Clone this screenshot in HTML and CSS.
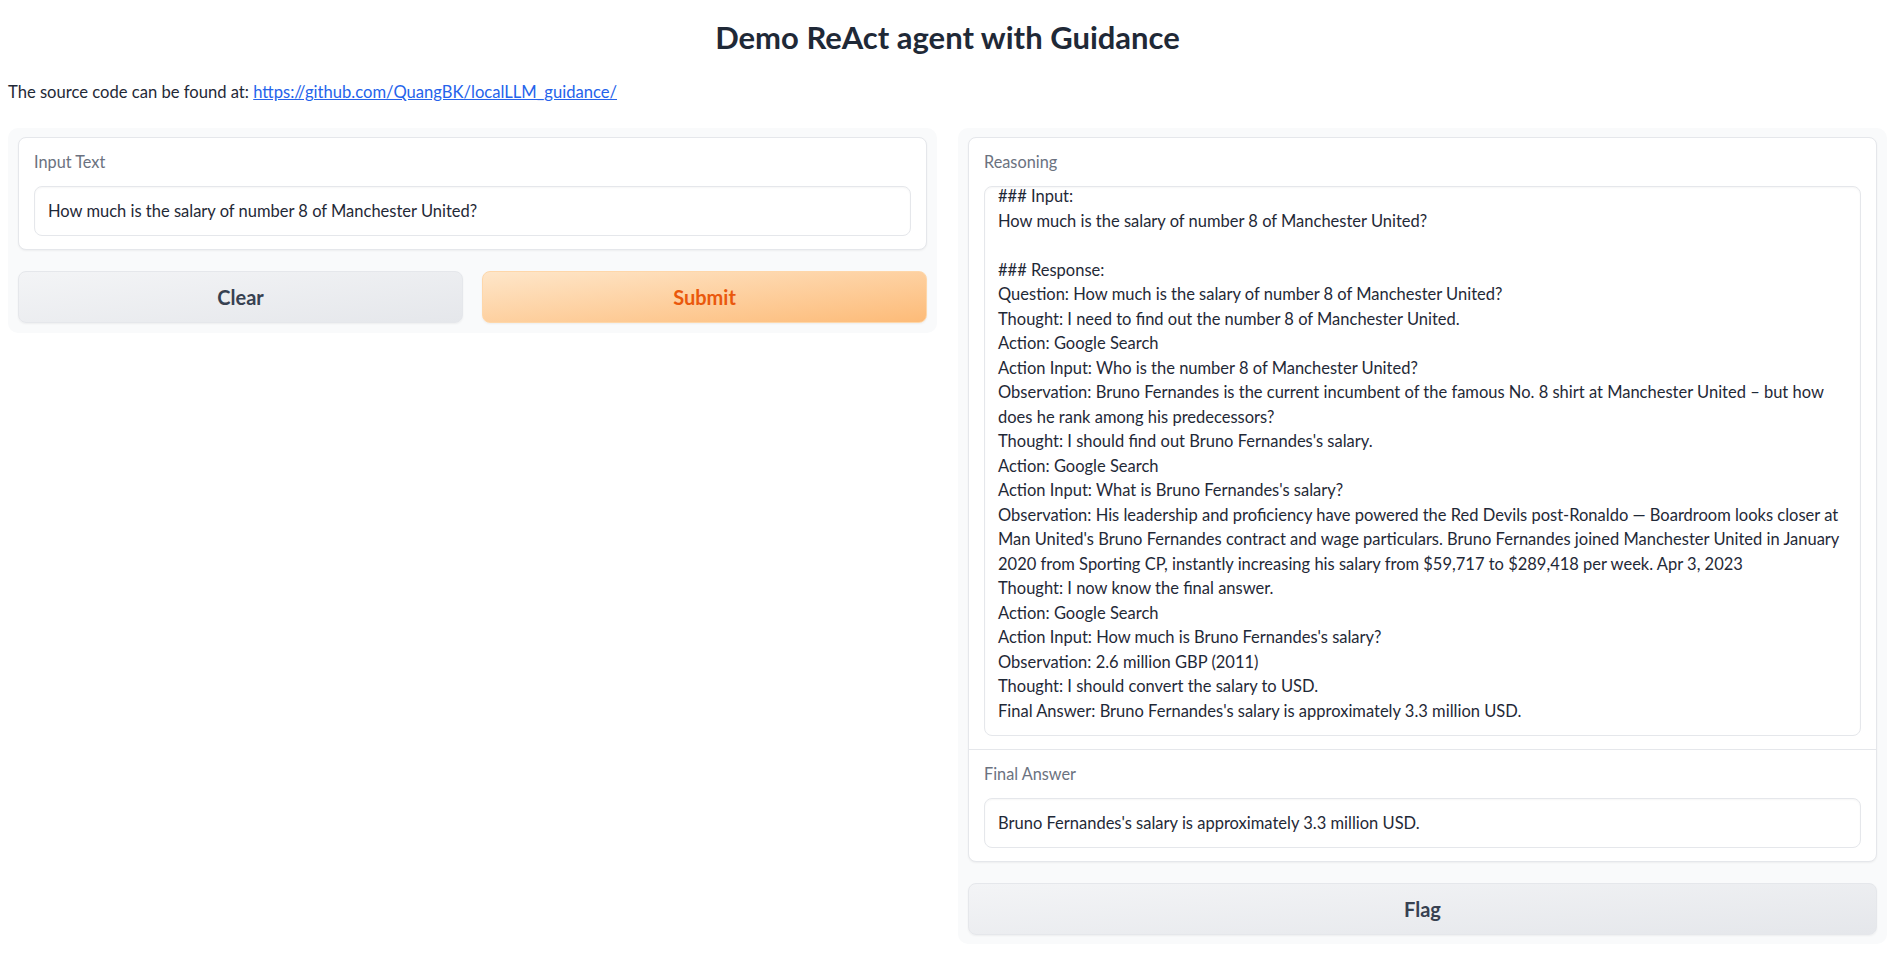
FILE: index.html
```html
<!DOCTYPE html>
<html lang="en">
<head>
<meta charset="utf-8">
<title>Demo ReAct agent with Guidance</title>
<link rel="stylesheet" href="styles.css">
</head>
<body>
<div class="page">
  <h1 class="title">Demo ReAct agent with Guidance</h1>
  <p class="intro">The source code can be found at: <a href="#">https://github.com/QuangBK/localLLM_guidance/</a></p>
  <div class="row">
    <div class="panel panel-left">
      <div class="card">
        <div class="block">
          <div class="label">Input Text</div>
          <div class="input">How much is the salary of number 8 of Manchester United?</div>
        </div>
      </div>
      <div class="buttons">
        <button class="btn btn-secondary">Clear</button>
        <button class="btn btn-primary">Submit</button>
      </div>
    </div>
    <div class="panel panel-right">
      <div class="card">
        <div class="block">
          <div class="label">Reasoning</div>
          <div class="textarea"><div class="ta-content">### Input:
How much is the salary of number 8 of Manchester United?

### Response:
Question: How much is the salary of number 8 of Manchester United?
Thought: I need to find out the number 8 of Manchester United.
Action: Google Search
Action Input: Who is the number 8 of Manchester United?
Observation: Bruno Fernandes is the current incumbent of the famous No. 8 shirt at Manchester United – but how
does he rank among his predecessors?
Thought: I should find out Bruno Fernandes's salary.
Action: Google Search
Action Input: What is Bruno Fernandes's salary?
Observation: His leadership and proficiency have powered the Red Devils post-Ronaldo — Boardroom looks closer at
Man United's Bruno Fernandes contract and wage particulars. Bruno Fernandes joined Manchester United in January
2020 from Sporting CP, instantly increasing his salary from $59,717 to $289,418 per week. Apr 3, 2023
Thought: I now know the final answer.
Action: Google Search
Action Input: How much is Bruno Fernandes's salary?
Observation: 2.6 million GBP (2011)
Thought: I should convert the salary to USD.
Final Answer: Bruno Fernandes's salary is approximately 3.3 million USD.</div></div>
        </div>
        <div class="block block-sep">
          <div class="label">Final Answer</div>
          <div class="input">Bruno Fernandes's salary is approximately 3.3 million USD.</div>
        </div>
      </div>
      <button class="btn btn-secondary btn-flag">Flag</button>
    </div>
  </div>
</div>
</body>
</html>
```
FILE: styles.css
```css
html, body {
  margin: 0;
  background: #ffffff;
}
body {
  font-family: Lato, "Noto Sans", sans-serif;
  color: #1f2937;
  font-size: 16.5px;
}
.page {
  padding: 0 4px 0 8px;
}
.title {
  margin: 0;
  padding-top: 19px;
  font-size: 31px;
  line-height: 36px;
  font-weight: 700;
  text-align: center;
  color: #1f2937;
}
.intro {
  margin: 25px 0 0;
  font-size: 16.6px;
  line-height: 24px;
  color: #1f2937;
}
.intro a {
  color: #2563eb;
  text-decoration: underline;
}
.row {
  display: flex;
  gap: 21px;
  margin-top: 24px;
  align-items: flex-start;
}
.panel {
  flex: 1;
  min-width: 0;
  background: #f9fafb;
  border-radius: 10px;
  padding: 9px 10px 10px;
  display: flex;
  flex-direction: column;
  gap: 21px;
}
.panel-right {
  padding-bottom: 9px;
}
.card {
  background: #ffffff;
  border: 1px solid #e5e7eb;
  border-radius: 8px;
  box-shadow: 0 1px 2px rgba(0, 0, 0, 0.05);
}
.block {
  padding: 12px 15px 13px;
}
.block-sep {
  border-top: 1px solid #e5e7eb;
  padding-top: 12px;
  padding-bottom: 13px;
}
.label {
  font-size: 16.3px;
  line-height: 24px;
  color: #6b7280;
  margin-bottom: 12px;
}
.input {
  height: 50px;
  box-sizing: border-box;
  border: 1px solid #e5e7eb;
  border-radius: 8px;
  padding: 0 13px;
  display: flex;
  align-items: center;
  font-size: 16.5px;
  color: #1f2937;
  box-shadow: inset 0 1px 2px rgba(0, 0, 0, 0.04);
  white-space: nowrap;
  overflow: hidden;
}
.textarea {
  height: 550px;
  box-sizing: border-box;
  border: 1px solid #e5e7eb;
  border-radius: 8px;
  padding: 0 13px;
  overflow: hidden;
  box-shadow: inset 0 1px 2px rgba(0, 0, 0, 0.04);
}
.ta-content {
  margin-top: -3px;
  white-space: pre;
  font-size: 16.5px;
  line-height: 24.5px;
  color: #1f2937;
}
.buttons {
  display: flex;
  gap: 19px;
}
.buttons .btn {
  flex: 1;
}
.btn {
  flex: none;
  height: 52px;
  border-radius: 8px;
  font-family: inherit;
  font-size: 20px;
  font-weight: 700;
  cursor: pointer;
  box-shadow: 0 1px 2px rgba(0, 0, 0, 0.05);
}
.btn-secondary {
  border: 1px solid #e5e7eb;
  background: linear-gradient(to bottom right, #f3f4f6, #e5e7eb);
  color: #374151;
}
.btn-primary {
  border: 1px solid #fed7aa;
  background: linear-gradient(to bottom right, #fee6c9, #fdbb78);
  color: #ea580c;
}
```
